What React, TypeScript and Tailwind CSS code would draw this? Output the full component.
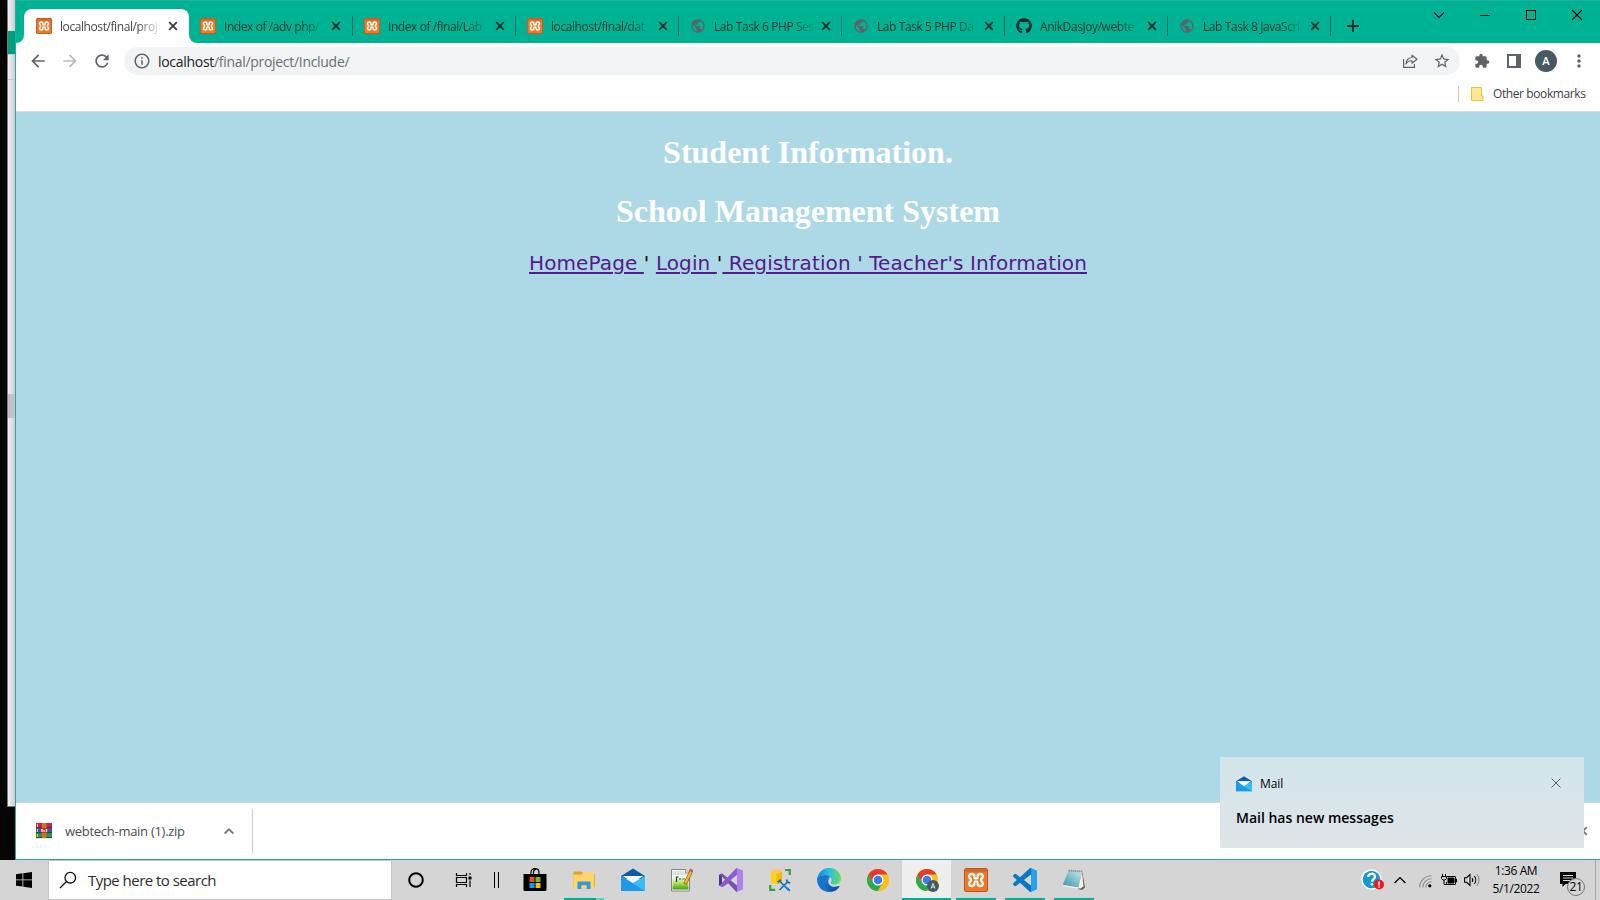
import React from "react";
import {
  MdArrowBack,
  MdArrowForward,
  MdRefresh,
  MdInfoOutline,
  MdStarBorder,
  MdExtension,
  MdMoreVert,
  MdPublic,
} from "react-icons/md";
import { FaGithub } from "react-icons/fa";

const XamppIcon = ({ size }: { size: number }) => (
  <svg width={size} height={size} viewBox="0 0 24 24" className="shrink-0">
    <rect width="24" height="24" rx="2.5" fill="#b9561f" />
    <rect x="1" y="1" width="22" height="22" rx="2" fill="#f37623" />
    <rect x="1" y="1" width="22" height="3" rx="1.5" fill="#d4682c" />
    <path
      d="M10.300 9.200V8.200C10.300 6.600 9.300 5.900 7.900 5.900S5.200 6.800 5.200 8.500c0 1.900 1.800 2 1.800 3.500s-1.800 1.600-1.800 3.500c0 1.700 1.300 2.600 2.700 2.600s2.400-.8 2.400-2.300c0-1.700.3-2.300 1.700-2.300s1.700.6 1.700 2.300c0 1.500 1 2.300 2.400 2.300s2.700-.9 2.700-2.600c0-1.900-1.800-2-1.800-3.500s1.800-1.600 1.800-3.500c0-1.700-1.300-2.600-2.700-2.600s-2.400.7-2.400 2.300v1c0 .9-.5 1.300-1.700 1.300s-1.700-.4-1.700-1.300z"
      fill="none"
      stroke="#fff"
      strokeWidth="2.300"
      strokeLinejoin="round"
    />
  </svg>
);

const CloseX = ({ className }: { className?: string }) => (
  <svg width="10" height="10" viewBox="0 0 10 10" className={"shrink-0 " + (className ?? "")}>
    <path d="M1.200 1.200l7.600 7.600M8.800 1.200L1.200 8.800" stroke="currentColor" strokeWidth="1.900" />
  </svg>
);

const MailIcon = ({ size }: { size: number }) => (
  <svg width={size} height={size} viewBox="0 0 24 24" className="shrink-0">
    <path d="M0 8L12 0.500 24 8v3H0z" fill="#0d5cab" />
    <path d="M0 8l12 7.500L24 8v15H0z" fill="#2fb5f3" />
    <path d="M2 8h20L12 14.500z" fill="#f3f6fa" />
    <path d="M0 8l24 15H0z" fill="#1c9ae6" />
    <path d="M2 8h20L12 14.500z" fill="#f3f6fa" />
    <path d="M12 15.500L24 8v15z" fill="#36bdf5" />
  </svg>
);

const ChromeIcon = ({ badge }: { badge?: boolean }) => (
  <svg width="24" height="24" viewBox="0 0 24 24">
    <circle cx="12" cy="12" r="11" fill="#fbc116" />
    <path d="M2.470 6.500A11 11 0 0 0 12 23l4.760-8.250L12 12 7.240 14.750z" fill="#2da94f" />
    <path d="M12 6.500h9.530A11 11 0 0 1 12 23l4.760-8.250z" fill="#fbc116" />
    <path d="M2.470 6.500A11 11 0 0 1 21.530 6.500H12L7.240 9.250 7.240 14.750z" fill="#e33b2e" />
    <circle cx="12" cy="12" r="5.500" fill="#fff" />
    <circle cx="12" cy="12" r="4.300" fill="#3b7ded" />
    {badge && (
      <>
        <circle cx="18" cy="18" r="6" fill="#455a64" />
        <path d="M16 20.500l2-5 2 5M16.700 19h2.600" stroke="#dfe6ea" strokeWidth="1" fill="none" />
      </>
    )}
  </svg>
);

const StoreIcon = () => (
  <svg width="24" height="24" viewBox="0 0 24 24">
    <path d="M8 7V4.500C8 2 9.500.7 12 .7S16 2 16 4.500V7M10.500 6V4c0-1.500 1-2.500 2.500-2.500" fill="none" stroke="#000" strokeWidth="1.200" />
    <path d="M.5 6h23v15.500a1.500 1.500 0 0 1-1.500 1.500H2a1.500 1.500 0 0 1-1.500-1.500z" fill="#000" />
    <rect x="6.500" y="9" width="5" height="5" fill="#f25022" />
    <rect x="12.500" y="9" width="5" height="5" fill="#7fba00" />
    <rect x="6.500" y="15" width="5" height="5" fill="#00a4ef" />
    <rect x="12.500" y="15" width="5" height="5" fill="#ffb900" />
  </svg>
);

const ExplorerIcon = () => (
  <svg width="24" height="24" viewBox="0 0 24 24">
    <path d="M1.500 3.500h8l2 2H22a.7.7 0 0 1 .7.7v13H1.500z" fill="#e0a018" />
    <path d="M1.500 6.500h8l2-2h10.500v15.500H1.500z" fill="#ffd566" />
    <path d="M5.500 21v-6.500a1 1 0 0 1 1-1h11a1 1 0 0 1 1 1V21h-4v-3.500h-5V21z" fill="#3a96dd" />
    <path d="M9.500 17.500h5V20h-5z" fill="#ffd566" />
  </svg>
);

const NotepadPlusIcon = () => (
  <svg width="24" height="24" viewBox="0 0 24 24">
    <defs>
      <linearGradient id="npp" x1="0" y1="0" x2="0" y2="1">
        <stop offset=".2" stopColor="#eef6e4" />
        <stop offset=".6" stopColor="#a6dc4d" />
        <stop offset="1" stopColor="#3f9a14" />
      </linearGradient>
    </defs>
    <path d="M1.500 1.500h14l4 3.500v18h-18z" fill="#f7f9f5" stroke="#858585" strokeWidth="1" />
    <rect x="2.500" y="7" width="16" height="14.500" fill="url(#npp)" />
    <path d="M2.500 4h12M2.500 6h14" stroke="#bdc9cc" strokeWidth="1" />
    <path d="M15.500 1.500v3.500h4" fill="#ddd" stroke="#858585" strokeWidth=".8" />
    <path d="M6.500 14V8.500M6.500 9h2M9 11h2M12.500 11h2" stroke="#333" strokeWidth="1.200" />
    <path d="M21.500 2.500L15 16" stroke="#8c5f16" strokeWidth="3.600" />
    <path d="M21 3.500L15.300 15.300" stroke="#f9b529" strokeWidth="2.300" />
    <path d="M20.500 3.500l1.200-2.200" stroke="#c85d5d" strokeWidth="3.200" />
  </svg>
);

const VisualStudioIcon = () => (
  <svg width="24" height="24" viewBox="0 0 24 24">
    <path d="M0 6.700l2.800-1.500L18 17.500V24l-1.300-.8L3 8.500v7L5.800 12l3.700 3-6 4L0 17.500z" fill="#7252aa" />
    <path d="M18 0v6.800L3.500 19 0 17.500 1 17l16-16.500z" fill="#8d5bd0" />
    <path d="M0 6.700l3 1.800v7L0 17.500z" fill="#52338f" />
    <path d="M18 0l6 2.600v18.600L18 24z" fill="#b180f0" />
  </svg>
);

const SqlToolIcon = () => (
  <svg width="24" height="24" viewBox="0 0 24 24">
    <path d="M3 3v11c0 1.300 2.600 2 5.500 2s5.500-.7 5.500-2V3z" fill="#ffd21a" />
    <path d="M8.500 4v12c3 0 5.500-.7 5.500-2V3z" fill="#f5bb00" />
    <ellipse cx="8.500" cy="3.300" rx="5.500" ry="2.300" fill="#ffc46b" />
    <path d="M17 2h4.800v5M2.200 17v4.800h5" stroke="#3f9d46" strokeWidth="2.200" fill="none" />
    <path d="M11.500 13l9 9M20 13.500l-8.500 8.500" stroke="#1273c4" strokeWidth="1.700" />
    <path d="M9.800 14.200l3.200-2.400M18.500 11.500l1 2.700 2.800.8M19 20l2.800 2.800" stroke="#1273c4" strokeWidth="1.800" fill="none" />
  </svg>
);

const EdgeIcon = () => (
  <svg width="24" height="24" viewBox="0 0 24 24">
    <defs>
      <linearGradient id="edgeTop" x1="0" y1=".3" x2="1" y2=".4">
        <stop offset="0" stopColor="#1689dc" />
        <stop offset=".5" stopColor="#2bbfe0" />
        <stop offset="1" stopColor="#65dd62" />
      </linearGradient>
      <linearGradient id="edgeLow" x1="0" y1="0" x2="1" y2="1">
        <stop offset="0" stopColor="#1b7fd4" />
        <stop offset="1" stopColor="#0b4596" />
      </linearGradient>
    </defs>
    <path d="M.2 10.500C1.200 4.300 6 0 12 0c6.800 0 12 4.800 12 10.500 0 3.700-2.900 6-6.200 6-2.600 0-4.200-.9-4.200-1.800 0-.6 1-1.100 1-2.900C14.600 9.300 12 7 8.200 7 4.500 7 1.200 8.900.2 10.500z" fill="url(#edgeTop)" />
    <path d="M.2 10.500C1.400 8.400 4.600 7 8.200 7c3 0 4.900 1.300 5.900 2.800-3.200-.9-6 1.500-5.800 5.200.2 4 3.700 7.700 7.700 8.200-1.200.5-2.600.8-4 .8C4.800 24-.7 17.500.2 10.500z" fill="#1575cf" />
    <path d="M11.500 9.800c-3 1.200-4.600 4.600-3.600 8 1.200 4 4.300 6 6.700 5.900 3.200-.3 6-2.200 7.800-5 .4-.6-.2-1-.8-.7-3.700 1.700-8.600.6-10-2.600-.8-1.900-.4-4.200 1-5.200z" fill="url(#edgeLow)" />
  </svg>
);

const VsCodeIcon = () => (
  <svg width="24" height="24" viewBox="0 0 24 24">
    <path
      d="M23.150 2.587L18.210.21a1.494 1.494 0 0 0-1.705.29l-9.460 8.630-4.120-3.128a.999.999 0 0 0-1.276.057L.327 7.261A1 1 0 0 0 .326 8.740L3.899 12 .326 15.260a1 1 0 0 0 .001 1.479L1.650 17.940a.999.999 0 0 0 1.276.057l4.120-3.128 9.460 8.630a1.492 1.492 0 0 0 1.704.29l4.942-2.377A1.500 1.500 0 0 0 24 20.060V3.939a1.500 1.500 0 0 0-.85-1.352zm-5.146 14.861L10.826 12l7.178-5.448v10.896z"
      fill="#0c76c3"
    />
    <path d="M18.200.2l4.950 2.387A1.500 1.500 0 0 1 24 3.940v16.120a1.500 1.500 0 0 1-.85 1.352L18 23.800z" fill="#27a2ee" />
  </svg>
);

const NotepadIcon = () => (
  <svg width="24" height="24" viewBox="0 0 24 24">
    <defs>
      <linearGradient id="note" x1="1" y1="0" x2="0" y2="1">
        <stop offset="0" stopColor="#cfe8ee" />
        <stop offset=".6" stopColor="#6fb6c4" />
        <stop offset="1" stopColor="#3e93a7" />
      </linearGradient>
    </defs>
    <path d="M20 2.500l3 17-3 2.500-4-1z" fill="#6c5f45" />
    <path d="M20 4l1.500 14.500-3.500 2.300-2-1z" fill="#f3f0e6" />
    <path d="M6.500 2.500L20 3.500l-3.500 16L.8 17z" fill="url(#note)" />
    <path d="M.8 17l15.700 2.500v1.300L.8 18.200z" fill="#e9f3f4" />
    <path d="M6.700 2.500l13.300 1" stroke="#777" strokeWidth="1.800" strokeDasharray="1 1" />
  </svg>
);

const WinRarIcon = () => (
  <svg width="16" height="16" viewBox="0 0 16 16" className="shrink-0">
    <rect width="16" height="5" y="0" fill="#c8234d" />
    <rect width="16" height="5" y="5" fill="#4b4bb4" />
    <rect width="16" height="5" y="10" fill="#1f9a3c" />
    <path d="M0 4.700h16M0 9.700h16M0 14.700h16" stroke="#26314a" strokeWidth=".8" />
    <path d="M1.500 1v3M1.500 6v3M1.500 11v3" stroke="#f2d64c" strokeWidth="1" />
    <rect x="6" width="4.500" height="15" fill="#d96c1e" />
    <rect x="5" y="5" width="6.500" height="5" fill="#c93a1c" />
    <path d="M6 9V6M10.500 9V6M8.200 9V7" stroke="#fff" strokeWidth="1.200" />
  </svg>
);

const tabs = [
  { title: "Index of /adv php/", icon: "xampp", pad: "pl-2.5" },
  { title: "Index of /final/Lab", icon: "xampp", pad: "pl-[11px]" },
  { title: "localhost/final/dat", icon: "xampp", pad: "pl-[11px]" },
  { title: "Lab Task 6 PHP Ses", icon: "globe", pad: "pl-[11px]" },
  { title: "Lab Task 5 PHP Da", icon: "globe", pad: "pl-[11px]" },
  { title: "AnikDasJoy/webte", icon: "github", pad: "pl-[11px]" },
  { title: "Lab Task 8 JavaScri", icon: "globe", pad: "pl-[11px]" },
];

const TabTitle = ({ children }: { children: React.ReactNode }) => (
  <span className="ml-2 w-[102px] shrink-0 whitespace-nowrap pt-px text-[12px] leading-4 tracking-[-0.42px] [mask-image:linear-gradient(to_right,black_76%,transparent)]">
    {children}
  </span>
);

const TabStrip = () => (
  <div className="flex h-[43px] items-start border-t border-[#1fae9a] bg-[#00b294] pt-2">
    <div className="relative ml-2 flex h-[34px] w-[165px] items-center rounded-t-lg bg-white pl-3 text-[#45484c]">
      <svg width="8" height="8" viewBox="0 0 8 8" className="absolute -left-2 bottom-0">
        <path d="M8 0v8H0a8 8 0 0 0 8-8z" fill="#fff" />
      </svg>
      <svg width="8" height="8" viewBox="0 0 8 8" className="absolute -right-2 bottom-0">
        <path d="M0 0v8h8a8 8 0 0 1-8-8z" fill="#fff" />
      </svg>
      <XamppIcon size={16} />
      <TabTitle>localhost/final/proj</TabTitle>
      <CloseX className="ml-1.5 text-[#3c4043]" />
    </div>
    <div className="ml-px flex h-[34px] items-center">
      {tabs.map((t) => (
        <div key={t.title} className={"flex h-5 w-[163px] items-center border-r border-[#0b6b5d] text-[#06382f] " + t.pad}>
          {t.icon === "xampp" && <XamppIcon size={16} />}
          {t.icon === "globe" && <MdPublic className="size-4 shrink-0 text-[#5f6368]" />}
          {t.icon === "github" && <FaGithub className="size-4 shrink-0 text-[#24292f]" />}
          <TabTitle>{t.title}</TabTitle>
          <CloseX className="ml-[5px] text-[#15322f]" />
        </div>
      ))}
    </div>
    <svg width="12" height="12" viewBox="0 0 12 12" className="ml-4 mt-[11px]">
      <path d="M6 0v12M0 6h12" stroke="#15322f" strokeWidth="2" />
    </svg>
    <div className="ml-auto flex h-3 items-center pr-[17px] text-black">
      <svg width="12" height="12" viewBox="0 0 12 12" className="mr-[34px]">
        <path d="M1 3.500l5 5 5-5" fill="none" stroke="currentColor" strokeWidth="1.100" />
      </svg>
      <svg width="12" height="12" viewBox="0 0 12 12" className="mr-[34px]">
        <path d="M1 6.500h10" stroke="currentColor" />
      </svg>
      <svg width="12" height="12" viewBox="0 0 12 12" className="mr-[34px]">
        <rect x="1.500" y="1.500" width="9" height="9" fill="none" stroke="currentColor" />
      </svg>
      <svg width="12" height="12" viewBox="0 0 12 12">
        <path d="M1 1l10 10M11 1L1 11" stroke="currentColor" strokeWidth="1.100" />
      </svg>
    </div>
  </div>
);

const Toolbar = () => (
  <div className="flex h-9 items-center bg-white text-[#5f6368]">
    <MdArrowBack className="ml-3 size-5" />
    <MdArrowForward className="ml-3 size-5 text-[#babcbe]" />
    <MdRefresh className="ml-3 size-5" />
    <div className="ml-3 flex h-7 w-[1336px] items-center rounded-full bg-[#f1f3f4] pl-[9px] pr-[9px]">
      <MdInfoOutline className="size-[18px]" />
      <span className="ml-[7px] text-[14px] tracking-[-0.3px] text-[#6a6e73]">
        <span className="text-[#202124]">localhost</span>/final/project/Include/
      </span>
      <svg width="16" height="16" viewBox="0 0 16 16" className="ml-auto mr-[15px]" fill="none" stroke="currentColor" strokeWidth="1.200">
        <path d="M1.600 6v8.400h10.800V11" />
        <path d="M10 2.200l5 4-5 4V7.800C7.300 7.600 5.200 8.600 4 11c.2-3.800 2.400-6.200 6-6.500z" strokeLinejoin="round" />
      </svg>
      <MdStarBorder className="size-[18px]" />
    </div>
    <MdExtension className="ml-3.5 size-4" />
    <svg width="14" height="14" viewBox="0 0 14 14" className="ml-[17px]">
      <path d="M0 0h14v14H0zM2 2v10h7V2z" fill="currentColor" fillRule="evenodd" />
    </svg>
    <div className="ml-3.5 flex size-[22px] items-center justify-center rounded-full bg-[#455a64] text-[11px] font-semibold text-white">A</div>
    <MdMoreVert className="ml-3 size-5" />
  </div>
);

const BookmarksBar = () => (
  <div className="flex h-[33px] items-center justify-end border-b border-[#d9dcdf] bg-white pb-[3px] pr-[14px]">
    <div className="mr-[11px] h-4 w-px bg-[#c8cacd]" />
    <svg width="14" height="16" viewBox="0 0 14 16">
      <path d="M1.500 1.500h10V10h1.500v4.500h-11.500z" fill="#ffe694" stroke="#e8c13f" />
    </svg>
    <span className="ml-[9px] w-[93px] whitespace-nowrap text-[12px] tracking-[-0.4px] text-[#3c4043]">Other bookmarks</span>
  </div>
);

const Page = () => (
  <main className="flex h-[690px] flex-col items-center bg-[#add8e6] pt-[22px] text-center">
    <h1 className="h-[37px] font-['Liberation_Serif',serif] text-[32px] font-bold leading-[37px] text-white">Student Information.</h1>
    <h1 className="mt-[22px] h-[37px] font-['Liberation_Serif',serif] text-[32px] font-bold leading-[37px] text-white">School Management System</h1>
    <nav className="mt-[21px] whitespace-pre font-['DejaVu_Sans',sans-serif] text-[20px] leading-6 tracking-[0.1px] text-black">
      <a className="text-[#551a8b] underline decoration-2 underline-offset-2">{"HomePage "}</a>
      {"' "}
      <a className="text-[#551a8b] underline decoration-2 underline-offset-2">{"Login "}</a>
      {"'"}
      <a className="text-[#551a8b] underline decoration-2 underline-offset-2">{" Registration ' Teacher's Information"}</a>
    </nav>
  </main>
);

const DownloadBar = () => (
  <div className="flex h-[57px] items-center border-t border-[#d5d8db] bg-white pl-5">
    <WinRarIcon />
    <span className="ml-[13px] w-[130px] whitespace-nowrap pt-px text-[13px] tracking-[-0.28px] text-[#4a4d51]">webtech-main (1).zip</span>
    <svg width="10" height="8" viewBox="0 0 10 8" className="ml-[29px]">
      <path d="M.7 6.500L5 2.200l4.300 4.300" fill="none" stroke="#757575" strokeWidth="1.800" />
    </svg>
    <div className="ml-[18px] h-11 w-px bg-[#c9cbce]" />
    <CloseX className="ml-auto mr-3 text-[#757575]" />
  </div>
);

const Toast = () => (
  <div className="absolute left-[1220px] top-[757px] h-[91px] w-[364px] bg-gradient-to-b from-[#d2e6eb] to-[#dfe4e8] px-4 pt-[19px] text-black">
    <div className="flex h-4 items-center">
      <MailIcon size={16} />
      <span className="ml-2 text-[12px] tracking-[-0.1px]">Mail</span>
      <svg width="10" height="10" viewBox="0 0 10 10" className="-mt-0.5 ml-auto mr-[7px]">
        <path d="M.5.5l9 9M9.500.5l-9 9" stroke="#5a6063" strokeWidth="1" />
      </svg>
    </div>
    <p className="mt-4 text-[14px] font-semibold leading-5">Mail has new messages</p>
  </div>
);

const apps = [
  { name: "store", icon: <StoreIcon />, bar: "" },
  { name: "explorer", icon: <ExplorerIcon />, bar: "split" },
  { name: "mail", icon: <MailIcon size={24} />, bar: "" },
  { name: "npp", icon: <NotepadPlusIcon />, bar: "" },
  { name: "vs", icon: <VisualStudioIcon />, bar: "" },
  { name: "sql", icon: <SqlToolIcon />, bar: "" },
  { name: "edge", icon: <EdgeIcon />, bar: "" },
  { name: "chrome", icon: <ChromeIcon />, bar: "" },
  { name: "chrome-profile", icon: <ChromeIcon badge />, bar: "active" },
  { name: "xampp", icon: <XamppIcon size={24} />, bar: "open" },
  { name: "vscode", icon: <VsCodeIcon />, bar: "open" },
  { name: "notepad", icon: <NotepadIcon />, bar: "open" },
];

const Taskbar = () => (
  <footer className="flex h-10 items-stretch bg-[#d5d5d5] text-black">
    <div className="flex w-12 items-center justify-center">
      <svg width="16" height="16" viewBox="0 0 16 16">
        <path d="M0 2.200L6.500 1.300v6.200H0zM7.300 1.200L16 0v7.500H7.300zM0 8.300h6.500v6.200L0 13.700zM7.300 8.300H16V16l-8.700-1.300z" />
      </svg>
    </div>
    <div className="flex w-[344px] items-center border border-[#c4c4c4] bg-white pl-2.5">
      <svg width="18" height="18" viewBox="0 0 18 18" fill="none" stroke="#111" strokeWidth="1.300">
        <circle cx="11.300" cy="6.700" r="5.300" />
        <path d="M7.500 10.500L1 17" />
      </svg>
      <span className="ml-[11px] text-[15px] tracking-[-0.53px] text-[#2b2b2b]">Type here to search</span>
    </div>
    <div className="flex w-12 items-center justify-center">
      <svg width="16" height="16" viewBox="0 0 16 16">
        <circle cx="8" cy="8" r="6.800" fill="none" stroke="#000" strokeWidth="2" />
      </svg>
    </div>
    <div className="flex w-12 items-center justify-center">
      <svg width="18" height="16" viewBox="0 0 18 16" fill="none" stroke="#000" strokeWidth="1.200">
        <path d="M1.500 1v2.500h10V1M1.500 15v-2.500h10V15M1.500 5.500h10v5h-10zM15 1v2M15 8.500V15" />
        <path d="M15 4.500v3" strokeWidth="3" />
      </svg>
    </div>
    <div className="flex w-[22px] items-center pl-1.5">
      <div className="h-4 w-[5px] border-x border-black" />
    </div>
    {apps.map((a) => (
      <div key={a.name} className={"flex w-[49px] flex-col items-center justify-end " + (a.bar === "active" ? "bg-[#eeeeee]" : "")}>
        <div className="flex h-[38px] items-center pt-0.5">{a.icon}</div>
        {a.bar === "" && <div className="h-0.5" />}
        {a.bar === "open" && <div className="h-0.5 w-10 bg-[#00b294]" />}
        {a.bar === "active" && <div className="h-0.5 w-full bg-[#00b294]" />}
        {a.bar === "split" && (
          <div className="flex h-0.5 w-10">
            <div className="w-8 bg-[#00b294]" />
            <div className="w-2 bg-[#66cdbb]" />
          </div>
        )}
      </div>
    ))}
    <div className="ml-auto flex items-center">
      <svg width="23" height="22" viewBox="0 0 23 22">
        <circle cx="10.500" cy="10.500" r="10.300" fill="#fff" />
        <circle cx="10.500" cy="10.500" r="8.700" fill="#1497d4" />
        <path d="M7.200 8c0-4.300 6.800-4.200 6.800-.3 0 2.300-3.100 2.500-3.100 5" fill="none" stroke="#fff" strokeWidth="2.300" />
        <circle cx="10.900" cy="15.300" r="1.400" fill="#fff" />
        <circle cx="18" cy="15.500" r="5" fill="#f01818" />
        <path d="M18 12.500v4M18 17.300v1.400" stroke="#fff" strokeWidth="1.400" />
      </svg>
      <svg width="12" height="8" viewBox="0 0 12 8" className="ml-[10px]">
        <path d="M.6 7L6 1.600 11.400 7" fill="none" stroke="#000" strokeWidth="1.300" />
      </svg>
      <svg width="13" height="13" viewBox="0 0 13 13" className="ml-[13px] mt-0.5" fill="none" stroke="#8c8c8c" strokeWidth="1.100">
        <path d="M.6 12.500C.6 6 6 .7 12.500.7M3.700 12.500c0-4.900 3.900-8.700 8.800-8.700M6.700 12.500c0-3.200 2.600-5.700 5.800-5.700" />
        <circle cx="10.800" cy="10.800" r="1.600" fill="#000" stroke="none" />
      </svg>
      <svg width="16" height="12" viewBox="0 0 16 12" className="ml-[9px]" fill="none" stroke="#000" strokeWidth="1">
        <path d="M6 2.500h8.500v8h-9V8M14.500 5h1v3h-1M1.500 0v2.500M4.500 0v2.500M.5 2.500h5v2L4 6H2L.5 4.500zM3 6v4.500h3" />
        <path d="M7 4h6v5H7z" fill="#000" />
      </svg>
      <svg width="17" height="14" viewBox="0 0 17 14" className="ml-[7px]" fill="none" stroke="#000" strokeWidth="1.100">
        <path d="M.6 4.700h2L6 1.500v11L2.600 9.300h-2zM8 5c1 1.200 1 2.800 0 4M10.300 3.200c2 2.200 2 5.400 0 7.600" />
        <path d="M12.700 1.200c3.100 3.400 3.100 8.200 0 11.600" stroke="#8c8c8c" />
      </svg>
      <div className="ml-[11px] w-[48px] whitespace-nowrap text-center text-[12px] leading-[18px] tracking-[-0.4px]">
        <div>1:36 AM</div>
        <div>5/1/2022</div>
      </div>
      <div className="relative ml-[20px] h-6 w-[26px]">
        <svg width="16" height="16" viewBox="0 0 16 16" className="mt-1">
          <path d="M0 0h16v12H5.500L2.500 15v-3H0z" fill="#000" />
          <path d="M3 3.500h10M3 6h10M3 8.500h7" stroke="#d5d5d5" />
        </svg>
        <span className="absolute left-[7px] top-[10px] flex size-[18px] items-center justify-center rounded-full border border-[#777] bg-[#d5d5d5] text-[12px] font-medium tracking-tight">21</span>
      </div>
      <div className="ml-[9px] mr-1 h-10 w-px bg-[#a5a5a5]" />
    </div>
  </footer>
);

export default function App() {
  return (
    <div className="relative h-[900px] w-[1600px] overflow-hidden bg-[#d5d5d5] font-['Open_Sans','Noto_Sans',sans-serif]">
      <div className="flex h-[860px]">
        <div className="flex w-[15px] bg-[#050505]">
          <div className="ml-[7px] flex h-[807px] w-2 flex-col border-b border-l border-[#777] bg-gradient-to-r from-[#f2f2f2] to-[#cfcfcf] pt-[31px]">
            <div className="h-[23px] bg-[#009c80]" />
            <div className="h-[26px] border-y border-[#c9c9c9]" />
            <div className="mt-[314px] h-6 bg-[#c2c2c2]" />
          </div>
        </div>
        <div className="flex w-[1585px] flex-col border-b border-l border-[#1fae9a]">
          <TabStrip />
          <Toolbar />
          <BookmarksBar />
          <Page />
          <DownloadBar />
        </div>
      </div>
      <Taskbar />
      <Toast />
    </div>
  );
}
